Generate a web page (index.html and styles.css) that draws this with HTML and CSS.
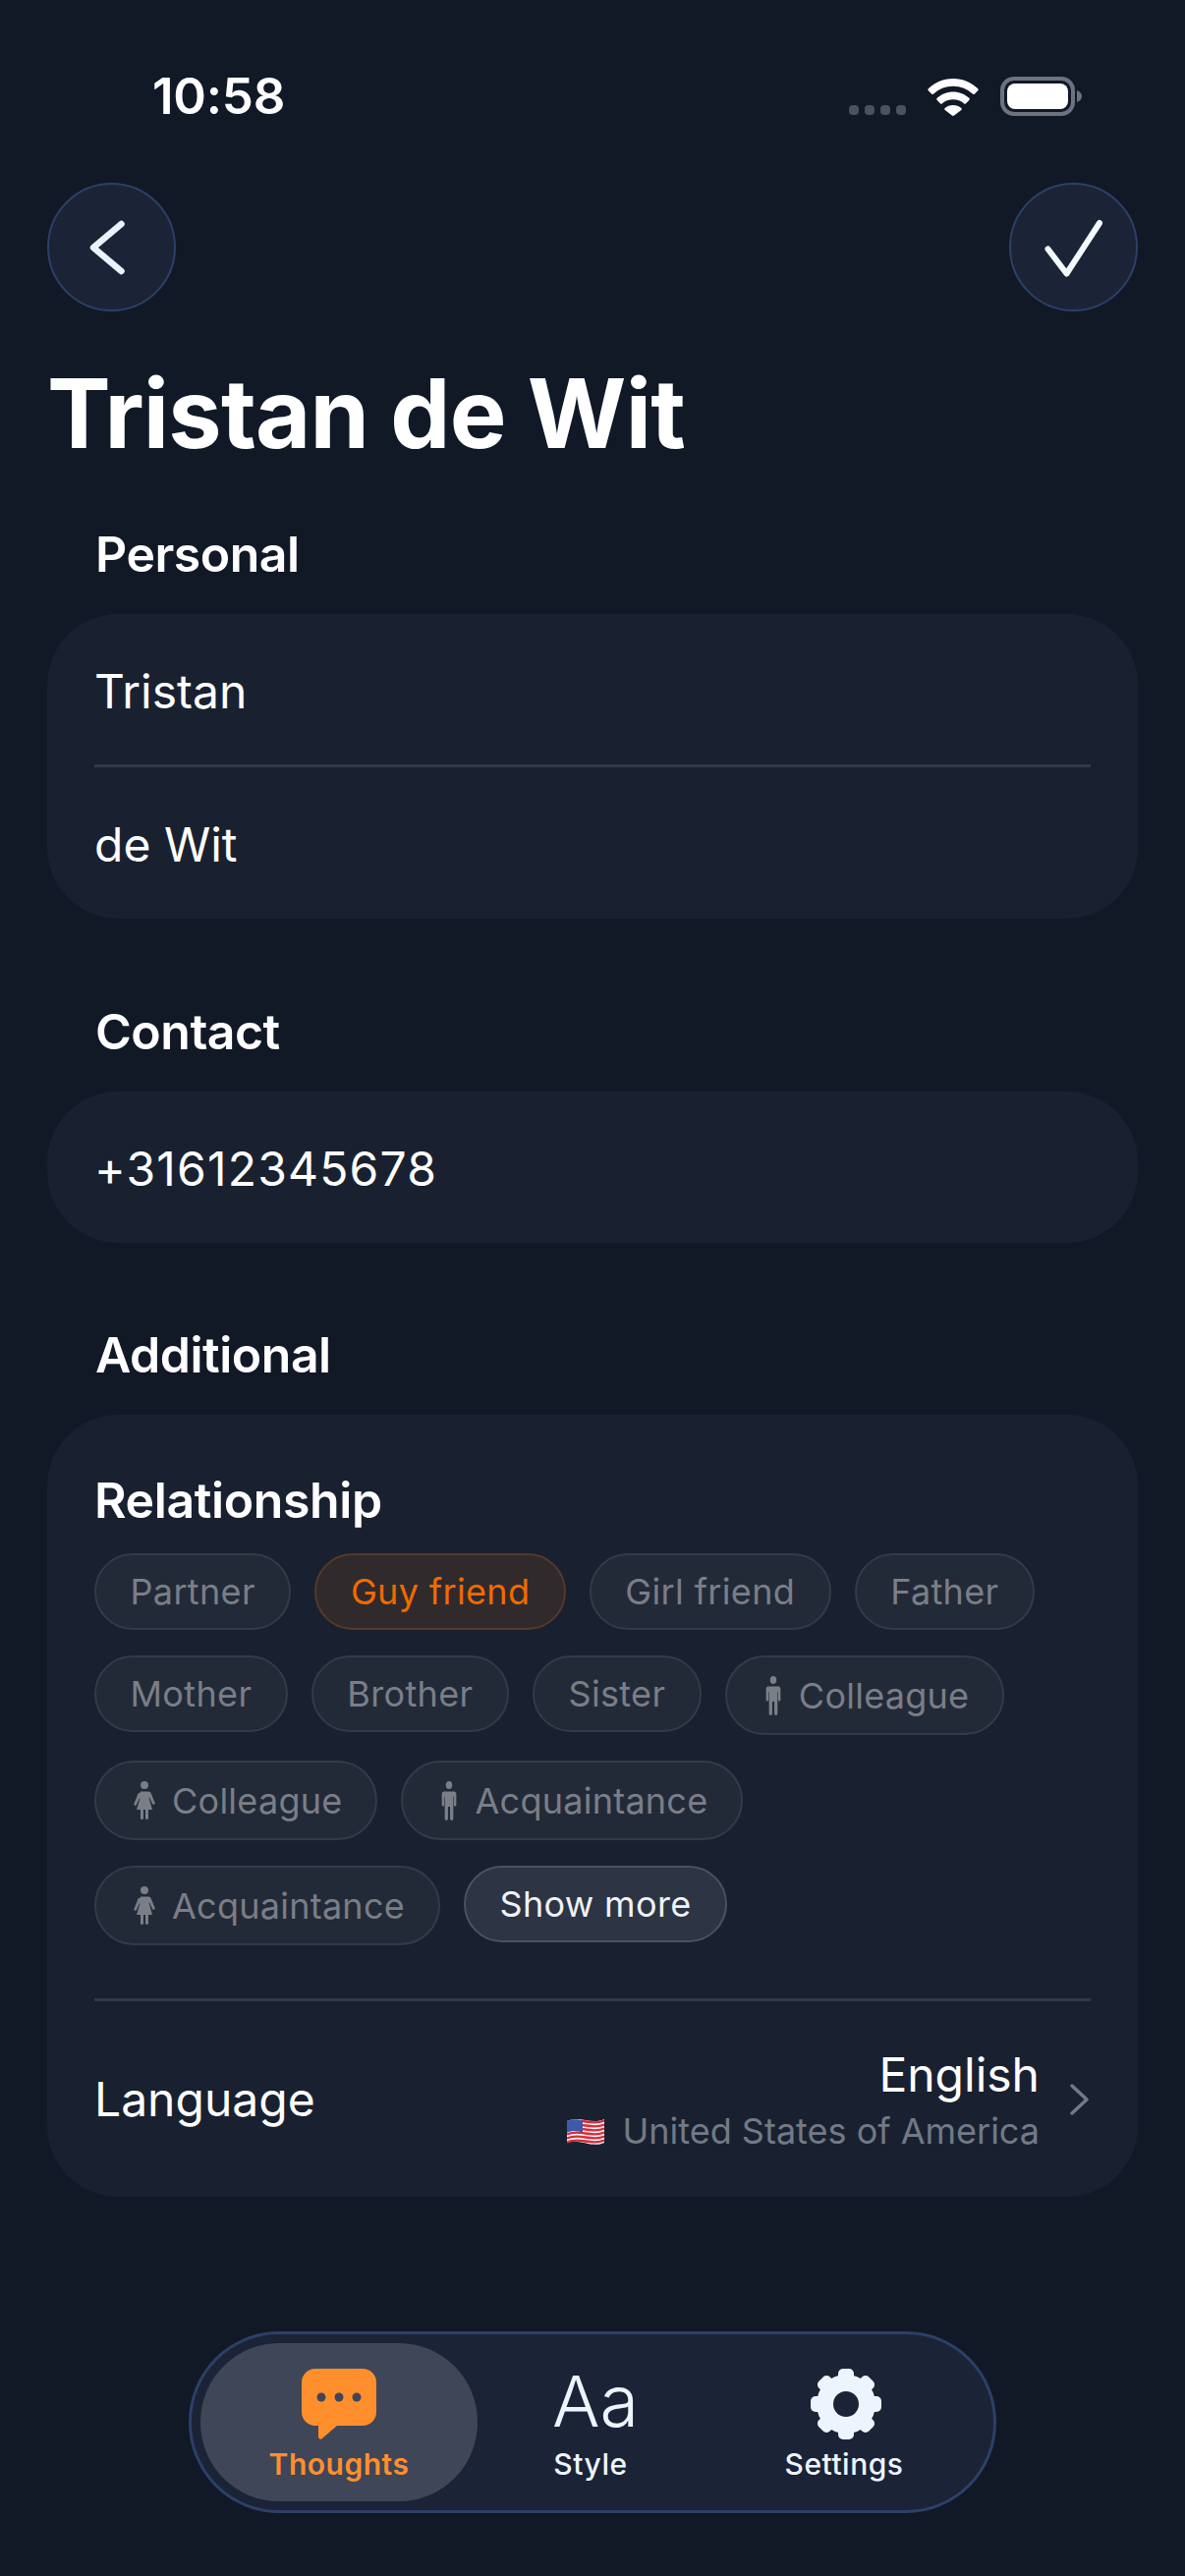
FILE: index.html
```html
<!DOCTYPE html>
<html lang="en">
<head>
<meta charset="utf-8">
<title>Tristan de Wit</title>
<link rel="stylesheet" href="styles.css">
</head>
<body>
<div class="screen">
  <div class="status">
    <span class="time">10:58</span>
    <div class="status-icons">
      <div class="signal"><i></i><i></i><i></i><i></i></div>
      <svg class="wifi" width="52" height="38" viewBox="0 0 52 38"><path fill="#fff" d="M26 0C16 0 7.500 4 0.800 10.200a1.500 1.500 0 0 0 0 2.100l3.200 3.300a1.500 1.500 0 0 0 2.100 0C11.300 10.700 18.300 7.700 26 7.700s14.700 3 19.900 7.900a1.500 1.500 0 0 0 2.100 0l3.200-3.300a1.500 1.500 0 0 0 0-2.100C44.500 4 36 0 26 0zM26 13.500c-6.300 0-12 2.400-16.300 6.300a1.500 1.500 0 0 0 0 2.100l3.200 3.300a1.500 1.500 0 0 0 2.100 0c2.900-2.500 6.800-4 11-4s8.100 1.500 11 4a1.500 1.500 0 0 0 2.100 0l3.200-3.300a1.500 1.500 0 0 0 0-2.100C38 15.900 32.300 13.500 26 13.500zM26 27c-3.200 0-6.100 1.200-8.300 3a1.300 1.300 0 0 0 0 1.900l7.200 5.600a1.700 1.700 0 0 0 2.200 0l7.200-5.600a1.300 1.300 0 0 0 0-1.900C32.100 28.200 29.200 27 26 27z"/></svg>
      <svg class="battery" width="84" height="40" viewBox="0 0 84 40"><rect x="2" y="2" width="72" height="36" rx="12" fill="none" stroke="#6d727c" stroke-width="4"/><rect x="7" y="7" width="62" height="26" rx="8" fill="#fff"/><path d="M78 14c3 1 5 3 5 6s-2 5-5 6z" fill="#6d727c"/></svg>
    </div>
  </div>

  <div class="topbar">
    <button class="round">
      <svg class="btn-icon btn-back" width="40" height="60" viewBox="0 0 40 60"><path d="M31.500 6 3 30l28.500 24" fill="none" stroke="#eaf2ff" stroke-width="6.500" stroke-linecap="round" stroke-linejoin="round"/></svg>
    </button>
    <button class="round">
      <svg class="btn-icon" width="60" height="60" viewBox="0 0 60 60"><path d="M3.500 31.500l19 25L56 5" fill="none" stroke="#f4f8ff" stroke-width="6" stroke-linecap="round" stroke-linejoin="round"/></svg>
    </button>
  </div>

  <h1 class="title">Tristan de Wit</h1>

  <h2 class="section">Personal</h2>
  <div class="card">
    <div class="row">Tristan</div>
    <div class="divider"></div>
    <div class="row row-tall">de Wit</div>
  </div>

  <h2 class="section section-gap">Contact</h2>
  <div class="card">
    <div class="row row-solo">+31612345678</div>
  </div>

  <h2 class="section section-gap section-tight">Additional</h2>
  <div class="card card-extra">
    <h3 class="rel-title">Relationship</h3>
    <div class="chips">
      <span class="chip">Partner</span>
      <span class="chip chip-on">Guy friend</span>
      <span class="chip">Girl friend</span>
      <span class="chip">Father</span>
      <span class="chip">Mother</span>
      <span class="chip">Brother</span>
      <span class="chip">Sister</span>
      <span class="chip chip-icon">
        <svg class="person person-m" width="18" height="40" viewBox="0 0 22 40" preserveAspectRatio="none"><circle cx="11" cy="4" r="4"/><path d="M5 10.500h12a3 3 0 0 1 3 3v10.500a1.500 1.500 0 0 1-3 0v-8h-.7V38a2 2 0 0 1-4 0V26h-2.600v12a2 2 0 0 1-4 0V16h-.7v8a1.500 1.500 0 0 1-3 0V13.500a3 3 0 0 1 3-3z"/></svg>
        Colleague
      </span>
      <span class="chip chip-icon">
        <svg class="person" width="22" height="40" viewBox="0 0 22 40"><circle cx="11" cy="4" r="4"/><path d="M7 10.500h8c1.500 0 2.300.8 2.800 2l3.800 9.500c.6 1.700-1.800 2.500-2.500 1l-3-6.500-.6 0L19 29h-4v9a1.600 1.600 0 0 1-3 0v-9h-2v9a1.600 1.600 0 0 1-3 0v-9H3l3.500-11.500-.6 0-3 6.500c-.7 1.500-3.100.7-2.500-1l3.800-9.500c.5-1.200 1.300-2 2.800-2z"/></svg>
        Colleague
      </span>
      <span class="chip chip-icon">
        <svg class="person person-m" width="18" height="40" viewBox="0 0 22 40" preserveAspectRatio="none"><circle cx="11" cy="4" r="4"/><path d="M5 10.500h12a3 3 0 0 1 3 3v10.500a1.500 1.500 0 0 1-3 0v-8h-.7V38a2 2 0 0 1-4 0V26h-2.600v12a2 2 0 0 1-4 0V16h-.7v8a1.500 1.500 0 0 1-3 0V13.500a3 3 0 0 1 3-3z"/></svg>
        Acquaintance
      </span>
      <span class="chip chip-icon">
        <svg class="person" width="22" height="40" viewBox="0 0 22 40"><circle cx="11" cy="4" r="4"/><path d="M7 10.500h8c1.500 0 2.300.8 2.800 2l3.800 9.500c.6 1.700-1.800 2.500-2.500 1l-3-6.500-.6 0L19 29h-4v9a1.600 1.600 0 0 1-3 0v-9h-2v9a1.600 1.600 0 0 1-3 0v-9H3l3.500-11.500-.6 0-3 6.500c-.7 1.500-3.100.7-2.500-1l3.800-9.500c.5-1.200 1.300-2 2.800-2z"/></svg>
        Acquaintance
      </span>
      <span class="chip chip-more">Show more</span>
    </div>
    <div class="divider divider-lang"></div>
    <div class="lang">
      <span class="lang-label">Language</span>
      <div class="lang-value">
        <span class="lang-name">English</span>
        <span class="lang-sub">
          <svg class="flag" width="38" height="28" viewBox="0 0 38 28">
            <path fill="#f2f2f4" d="M0 4c13-6 25 4 38-2v24C25 32 13 21 0 26z"/>
            <path fill="none" stroke="#d92d3c" stroke-width="2.300" d="M0 5.500c13-6 25 4 38-2M0 9.500c13-6 25 4 38-2M0 13.500c13-6 25 4 38-2M0 17.500c13-6 25 4 38-2M0 21.500c13-6 25 4 38-2M0 25.500c13-6 25 4 38-2"/>
            <path fill="#3c5aa8" d="M0 4c6-2.800 11-1.700 16 .1V15.700C11 14 6 13 0 15.700z"/>
          </svg>
          United States of America
        </span>
      </div>
      <svg class="chev" width="20" height="32" viewBox="0 0 20 32"><path d="M0 2l15 14L0 30" fill="none" stroke="#737985" stroke-width="3.500" stroke-linecap="round" stroke-linejoin="round"/></svg>
    </div>
  </div>

  <nav class="tabbar">
    <div class="tab tab-on">
      <svg class="tab-icon" width="76" height="72" viewBox="0 0 76 72"><path fill="#ff8f2d" d="M14 0h48a14 14 0 0 1 14 14v30a14 14 0 0 1-14 14H36L22 70c-2 3-5 2-5-1V58h-3A14 14 0 0 1 0 44V14A14 14 0 0 1 14 0z"/><circle cx="20" cy="29" r="4.500" fill="#3e4658"/><circle cx="38" cy="29" r="4.500" fill="#3e4658"/><circle cx="56" cy="29" r="4.500" fill="#3e4658"/></svg>
      <span>Thoughts</span>
    </div>
    <div class="tab">
      <span class="aa">Aa</span>
      <span>Style</span>
    </div>
    <div class="tab">
      <svg class="tab-icon gear" width="72" height="72" viewBox="0 0 72 72">
        <g fill="#eef4fd">
          <rect x="28" y="0" width="16" height="72" rx="5"/>
          <rect x="28" y="0" width="16" height="72" rx="5" transform="rotate(45 36 36)"/>
          <rect x="28" y="0" width="16" height="72" rx="5" transform="rotate(90 36 36)"/>
          <rect x="28" y="0" width="16" height="72" rx="5" transform="rotate(135 36 36)"/>
        </g>
        <circle cx="36" cy="36" r="21.500" fill="none" stroke="#eef4fd" stroke-width="17"/>
        <circle cx="36" cy="36" r="13" fill="#1b2336"/>
      </svg>
      <span>Settings</span>
    </div>
  </nav>
</div>
</body>
</html>
```
FILE: styles.css
```css
* { box-sizing: border-box; }
html, body { margin: 0; padding: 0; }
body {
  width: 1206px;
  height: 2622px;
  overflow: hidden;
  background: #111927;
  color: #fff;
  font-family: Inter, "Liberation Sans", sans-serif;
}
.screen {
  height: 2622px;
  display: flex;
  flex-direction: column;
  padding: 0 48px;
}
.status {
  height: 186px;
  display: flex;
  align-items: flex-start;
  justify-content: space-between;
  padding: 68px 0 0 107px;
  flex: none;
}
.time { font-size: 51px; font-weight: 600; line-height: 60px; letter-spacing: -0.2px; }
.status-icons { display: flex; align-items: flex-end; gap: 22px; padding: 10px 56px 0 0; }
.signal { display: flex; gap: 6px; padding-bottom: 1px; }
.signal i { display: block; width: 10px; height: 10px; border-radius: 4px; background: #4b515d; }
.wifi, .battery { display: block; }
.topbar { display: flex; justify-content: space-between; flex: none; }
.round {
  width: 131px;
  height: 131px;
  border-radius: 50%;
  border: 2px solid #2c4068;
  background: #1b2436;
  padding: 0;
  display: flex;
  align-items: center;
  justify-content: center;
}
.btn-icon { overflow: visible; }
.btn-back { margin-left: -4px; }
.title { margin: 46px 0 0; font-size: 97px; line-height: 116px; font-weight: 700; letter-spacing: -0.8px; }
.section { margin: 0 0 0 49px; font-size: 50px; line-height: 60px; font-weight: 600; letter-spacing: -0.5px; }
.title + .section { margin-top: 55px; }
.section-gap { margin-top: 85px; }
.section-tight { margin-top: 84px; }
.card { background: #192130; border-radius: 72px; padding: 0 48px; margin-top: 31px; }
.row { height: 153px; display: flex; align-items: center; font-size: 48px; padding-top: 3px; }
.row-tall { height: 154px; }
.row-solo { height: 154px; letter-spacing: 1.2px; }
.divider { height: 3px; background: #323947; }
.card-extra { margin-top: 31px; padding-top: 57px; }
.rel-title { margin: 0; font-size: 50px; line-height: 60px; font-weight: 600; letter-spacing: -0.4px; }
.chips { display: flex; flex-wrap: wrap; gap: 26px 24px; margin-top: 24px; }
.chip {
  height: 78px;
  padding: 0 34.5px;
  display: inline-flex;
  align-items: center;
  border-radius: 39px;
  border: 2px solid #343a47;
  background: #232a37;
  color: #7a7e87;
  font-size: 36px;
  letter-spacing: 0.35px;
}
.chip-on { background: #302a2c; border-color: #56392a; color: #f06a00; }
.chip-icon { height: 81px; border-radius: 41px; padding: 0 34px 0 38px; gap: 17px; letter-spacing: 0.25px; }
.chip-more { background: #2d3443; border-color: #4a5160; color: #f0f2f6; }
.person { fill: #7a7e87; display: block; }
.divider-lang { margin-top: 54px; }
.lang { height: 199px; display: flex; align-items: center; }
.lang-label { font-size: 48px; flex: 1; }
.lang-value { display: flex; flex-direction: column; align-items: flex-end; gap: 6px; }
.lang-name { font-size: 48px; line-height: 58px; }
.lang-sub { display: flex; align-items: center; gap: 18px; font-size: 36px; line-height: 44px; color: #737985; }
.flag { display: block; }
.chev { margin-left: 33px; margin-right: -1px; overflow: visible; }
.tabbar {
  margin: auto auto 64px;
  width: 822px;
  height: 185px;
  border-radius: 92px;
  border: 3px solid #2c4068;
  background: #1b2336;
  display: grid;
  grid-template-columns: 282px 230px 1fr;
  padding: 9px 9px;
}
.tab {
  display: flex;
  flex-direction: column;
  align-items: center;
  justify-content: flex-end;
  gap: 6px;
  border-radius: 80px;
  padding-bottom: 19px;
  font-size: 30px;
  line-height: 38px;
  font-weight: 500;
  letter-spacing: 0.5px;
  color: #eef4fd;
}
.tab-on { background: #3e4658; color: #ff8f2d; font-weight: 600; }
.tab-icon { display: block; }
.gear { margin-left: 3px; }
.aa { font-size: 72px; line-height: 72px; font-weight: 300; letter-spacing: 0; margin: 0 0 3px 10px; }
```
